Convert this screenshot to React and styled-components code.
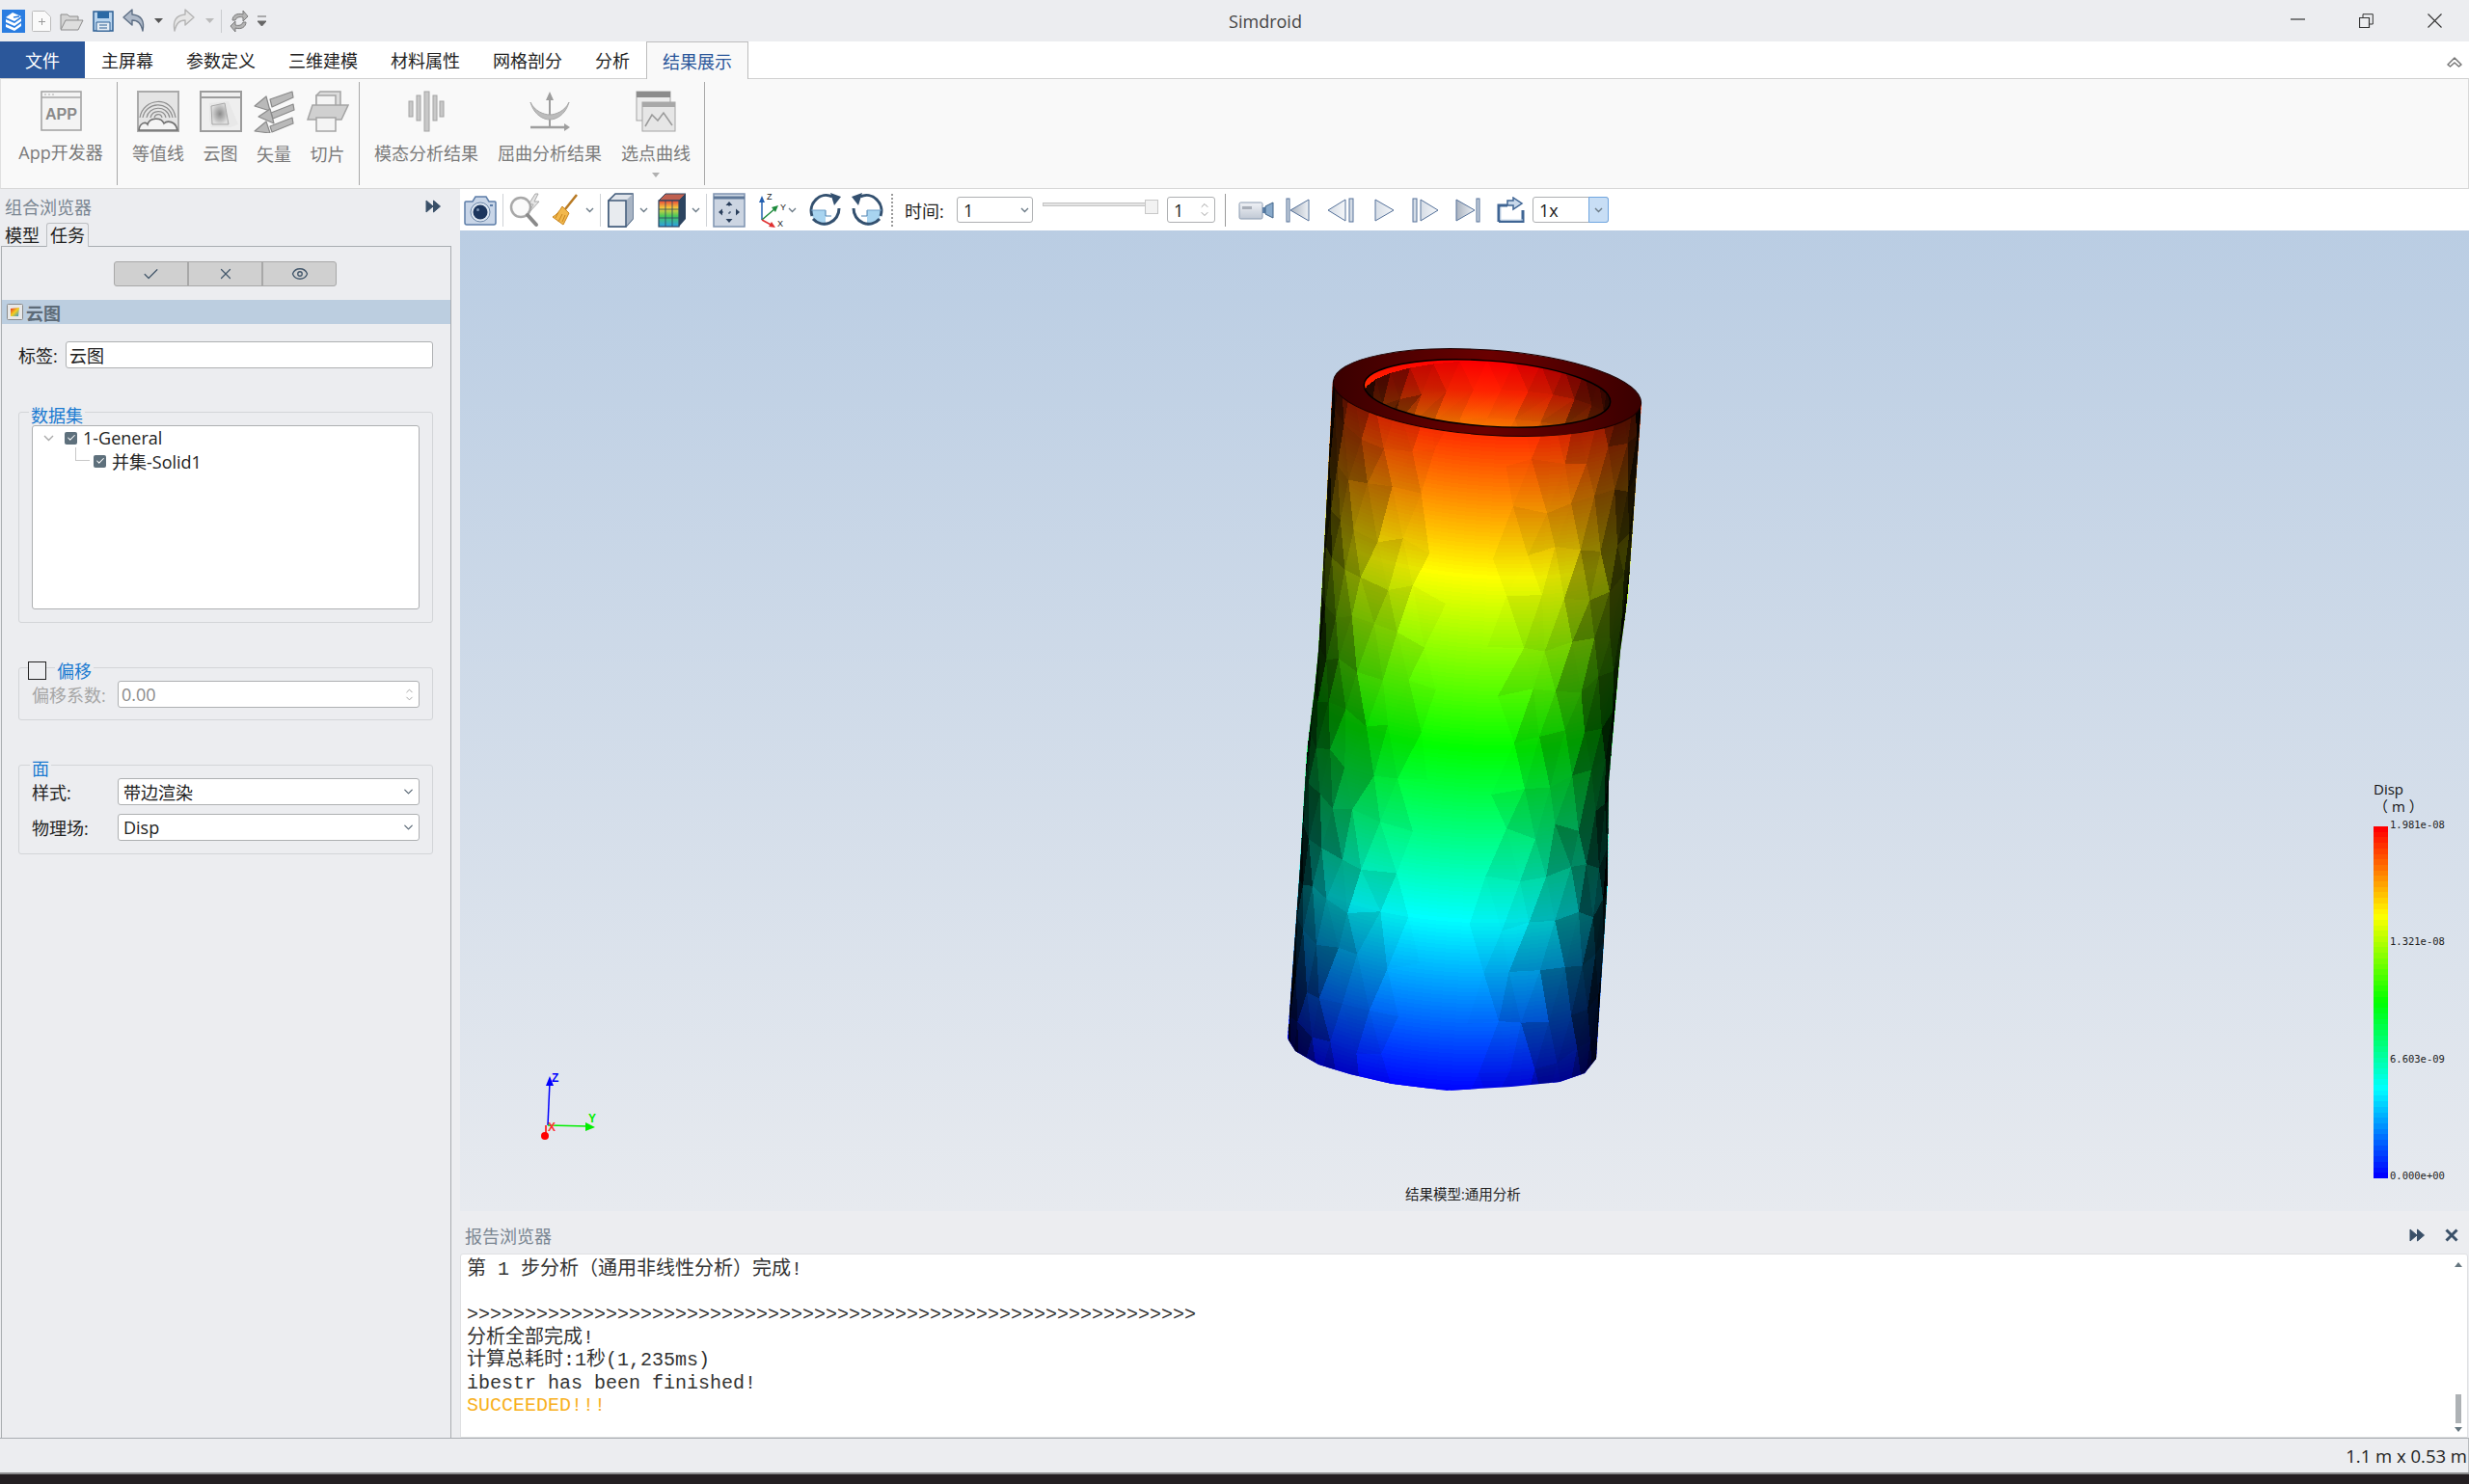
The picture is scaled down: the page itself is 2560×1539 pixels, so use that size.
import React from 'react';
import styled, { createGlobalStyle } from 'styled-components';
import { Check, X, Eye, ChevronDown, ChevronUp } from 'lucide-react';

const SANS = `"Open Sans","Noto Sans CJK SC",sans-serif`;
const PANEL = '#ecedf0';

const Global = createGlobalStyle`
  html, body { margin: 0; padding: 0; background: ${PANEL}; }
  * { box-sizing: border-box; }
`;

/* ---------- model geometry ---------- */
const LEFT = [[395,1382],[565,1373],[675,1367],[716,1363],[779,1355],[910,1347],[1077,1335]];
const RIGHT = [[418,1702],[617,1688],[675,1680],[811,1668],[915,1667],[1098,1655]];
const BOTTOM = [[1343,1090],[1367,1104],[1400,1114],[1443,1124],[1500,1131],[1567,1127],[1617,1122],[1643,1113]];
const interp = (t, y) => {
  if (y <= t[0][0]) return t[0][1];
  for (let i = 1; i < t.length; i++) if (y <= t[i][0]) {
    const a = t[i-1], b = t[i];
    return a[1] + (b[1]-a[1])*(y-a[0])/(b[0]-a[0]);
  }
  return t[t.length-1][1];
};
const pt = (u, yc) => {
  const L = interp(LEFT, yc-11), R = interp(RIGHT, yc+11);
  const x = (L+R)/2 + u*(R-L)/2;
  const y = yc + 11*Math.max(-1,Math.min(1,u)) + 44*Math.sqrt(Math.max(0,1-u*u));
  return [x.toFixed(1), y.toFixed(1)].join(',');
};
const jet = (s) => {
  const stops = [[255,0,0],[255,255,0],[0,255,0],[0,255,255],[0,0,255]];
  const c = Math.max(0, Math.min(0.9999, s))*4, i = Math.floor(c), f = c-i;
  const m = stops[i].map((v,k) => Math.round(v+(stops[i+1][k]-v)*f));
  return `rgb(${m[0]},${m[1]},${m[2]})`;
};
let seed = 4711;
const rnd = () => { seed = (seed*16807)%2147483647; return seed/2147483647; };

const strips = [];
for (let yc = 300; yc < 1150; yc += 4) {
  const top = [], bot = [];
  for (let u = -1.2; u <= 1.21; u += 0.1) { top.push(pt(u,yc)); bot.unshift(pt(u,yc+6)); }
  strips.push({ p: top.concat(bot).join(' '), c: jet((yc-374)/712) });
}
const facets = [];
{
  const N = 15, M = 15, dT = Math.PI/N, y0 = 385, dY = (1110-385)/M, V = [];
  for (let j = 0; j <= M+1; j++) {
    V[j] = [];
    for (let i = 0; i <= N+3; i++) {
      V[j][i] = { th: -Math.PI/2 + (i-1.5 + (j%2 ? .5 : 0))*dT + (rnd()-.5)*dT*.3, y: y0 + j*dY + (rnd()-.5)*dY*.3 };
    }
  }
  const P = (v) => pt(Math.sin(Math.max(-Math.PI/2,Math.min(Math.PI/2,v.th))), v.y);
  const add = (a,b,c) => {
    const th = (a.th+b.th+c.th)/3 + (rnd()-.5)*.2 + 0.05;
    const cl = Math.max(-Math.PI/2,Math.min(Math.PI/2,th));
    const o = 1-Math.min(1,Math.pow(Math.cos(cl),1.35)*1.04);
    if (o > .01) facets.push({ p: `${P(a)} ${P(b)} ${P(c)}`, o: o.toFixed(3) });
  };
  for (let j = 0; j <= M; j++) for (let i = 0; i < N+3; i++) {
    if (j%2 === 0) {
      add(V[j][i],V[j][i+1],V[j+1][i]);
      add(V[j+1][i],V[j+1][i+1],V[j][i+1]);
    } else {
      add(V[j][i],V[j+1][i+1],V[j+1][i]);
      add(V[j][i],V[j][i+1],V[j+1][i+1]);
    }
  }
}
const inner = [];
{
  const N = 14, rows = 3;
  const Q = (i,j) => {
    const th = -Math.PI/2 + (i + (j%2?.5:0))*Math.PI/N;
    const t = Math.max(-Math.PI/2,Math.min(Math.PI/2,th));
    return { s: Math.sin(t), p: `${(1542+128*Math.sin(t)).toFixed(1)},${(408-34*Math.cos(t)+j*30).toFixed(1)}` };
  };
  for (let j = 0; j < rows; j++) for (let i = -1; i < N+1; i++) {
    const a=Q(i,j), b=Q(i+1,j), c=Q(i,j+1), d=Q(i+1,j+1);
    [[a,b,c],[c,d,b]].forEach(([x,y,z]) => {
      const s = Math.abs((x.s+y.s+z.s)/3)+(rnd()-.5)*.12;
      inner.push({ p:`${x.p} ${y.p} ${z.p}`, o: Math.max(0,Math.min(.85,s*s*.95)).toFixed(3) });
    });
  }
}
const outline = [[1382,395],[1702,418],...RIGHT.slice(1).map(r=>[r[1],r[0]]),...BOTTOM.slice().reverse(),...LEFT.slice().reverse().map(r=>[r[1],r[0]])].map(p=>p.join(',')).join(' ');
const bands = Array.from({length:64},(_,i)=>jet(i/63));

/* ---------- chrome ---------- */
const Root = styled.div`
  width: 2560px; height: 1539px; display: flex; flex-direction: column; overflow: hidden;
  background: ${PANEL}; font-family: ${SANS}; font-size: 18px; color: #222;
`;
const TitleBar = styled.div`
  height: 43px; flex: none; display: flex; align-items: center; position: relative; background: ${PANEL};
`;
const Quick = styled.div`display: flex; align-items: center; height: 43px; padding-left: 2px;`;
const QuickSlot = styled.div`
  margin-left: ${p => p.$l}px; width: ${p => p.$w}px; height: 24px; display: flex; align-items: center; justify-content: center; flex: none;
`;
const QuickSep = styled.div`margin-left: ${p => p.$l}px; width: 1px; height: 24px; background: #c9cbce;`;
const AppTitle = styled.div`
  position: absolute; left: 0; right: 0; top: 9px; text-align: center; font-size: 18px; line-height: 26px; color: #444; text-indent: 64px;
`;
const WinCtl = styled.div`
  position: absolute; top: 0; height: 43px; display: flex; right: 0; padding-right: 28px; gap: 56px; align-items: center;
`;
const MenuBar = styled.div`
  height: 38px; flex: none; display: flex; align-items: stretch; background: #fff; position: relative;
`;
const FileTab = styled.div`
  width: 88px; background: #2b579a; color: #fff; display: flex; align-items: center; justify-content: center;
`;
const MenuItem = styled.div`padding: 0 17px; display: flex; align-items: center; white-space: nowrap; color: #222;`;
const ActiveTab = styled.div`
  padding: 0 16px; height: 39px; display: flex; align-items: center; color: #2b579a;
  background: #f9f9f9; border: 1px solid #bdbdbd; border-bottom: 0; position: relative; z-index: 1;
`;
const Collapse = styled.div`position: absolute; right: 7px; top: 10px; width: 16px; height: 16px;`;
const Ribbon = styled.div`
  height: 115px; flex: none; display: flex; background: #f9f9f9; border-top: 1px solid #d0d0d0; border-bottom: 1px solid #d8d8d8; border-right: 1px solid #d8d8d8; border-left: 1px solid #e0e0e0; position: relative;
`;
const RibbonGroup = styled.div`
  display: flex; width: ${p => p.$w}px; padding: 0 0 0 ${p => p.$pl}px; gap: ${p => p.$gap}px; flex: none; position: relative;
  &::after { content: ''; position: absolute; right: 0; top: 3px; bottom: 3px; width: 1px; background: #a9a9a9; }
`;
const RibbonBtn = styled.div`
  display: flex; flex-direction: column; align-items: center; color: #7b7b7b; white-space: nowrap; padding-top: 12px; position: relative; flex: none;
  width: ${p => p.$w}px;
`;
const RibbonLabel = styled.div`margin-top: 10px; line-height: 24px; font-size: 18px;`;
const MoreArrow = styled.div`
  position: absolute; left: 50%; margin-left: -4px; top: 97px; width: 0; height: 0; border: 4.5px solid transparent; border-top: 5px solid #b0b0b0;
`;
const Body = styled.div`flex: 1; display: flex; min-height: 0;`;
const LeftPanel = styled.div`
  width: 477px; flex: none; display: flex; flex-direction: column; background: ${PANEL};
`;
const PanelHead = styled.div`
  height: 35px; display: flex; align-items: center; justify-content: space-between; padding: 0 12px 0 5px; color: #7a8692; flex: none; width: 470px;
`;
const TabRow = styled.div`display: flex; height: 24px; padding-left: 5px; flex: none; position: relative; z-index: 1;`;
const PlainTab = styled.div`width: 42px; line-height: 24px; padding-top: 1px;`;
const PaneTab = styled.div`
  width: 44px; margin-left: 1px; background: ${PANEL}; border: 1px solid #bdbfc2; border-bottom: 0; border-radius: 3px 3px 0 0; text-align: center; line-height: 25px; height: 25px;
`;
const Pane = styled.div`
  width: 467px; margin-left: 1px; flex: 1; border: 1px solid #a9adb1; border-bottom: 0; display: flex; flex-direction: column; padding-top: 15px;
`;
const BtnBar = styled.div`
  align-self: center; width: 231px; height: 26px; display: flex; border: 1px solid #a8a8a8; border-radius: 3px; background: #d0d0d0; margin-left: -2px; flex: none;
`;
const BarBtn = styled.div`
  flex: 1; display: flex; align-items: center; justify-content: center; color: #44586c;
  & + & { border-left: 2px solid #a8a8a8; }
`;
const SectionBar = styled.div`
  margin-top: 14px; height: 25px; background: #bccee0; display: flex; align-items: center; padding-left: 5px; gap: 3px; font-weight: 700; color: #5d6b78; flex: none;
`;
const LabelRow = styled.div`
  display: flex; align-items: center; height: 28px; margin: ${p => p.$m || '18px 0 0 17px'}; flex: none;
`;
const FieldLabel = styled.div`width: ${p => p.$w}px; flex: none; color: ${p => p.$muted ? '#a6a6a6' : '#222'}; white-space: nowrap;`;
const TextInput = styled.div`
  width: ${p => p.$w}px; height: 28px; background: #fff; border: 1px solid #aeb0b2; border-radius: 3px; display: flex; align-items: center; padding-left: ${p => p.$pl || 3}px; color: ${p => p.$muted ? '#8a8a8a' : '#222'}; position: relative; flex: none;
`;
const GroupBox = styled.div`
  margin: ${p => p.$mt}px 0 0 17px; width: 430px; height: ${p => p.$h}px; border: 1px solid #d3d5d8; border-radius: 3px; position: relative; flex: none; padding: 13px 0 0 13px;
`;
const GroupTitle = styled.div`
  position: absolute; left: ${p => p.$l}px; top: -7px; background: ${PANEL}; color: #1a7ad0; line-height: 20px; padding: 0 2px; display: flex; align-items: center;
`;
const BoxCheck = styled.div`
  position: absolute; left: 9px; top: -7px; width: 19px; height: 19px; border: 1px solid #222; background: ${PANEL};
`;
const TreeBox = styled.div`
  width: 402px; height: 191px; background: #fff; border: 1px solid #aeb0b2; border-radius: 3px;
`;
const TreeRow = styled.div`
  display: flex; align-items: center; height: 24px; padding-left: ${p => p.$l}px; white-space: nowrap; position: relative;
`;
const TreeChevron = styled.svg`margin-right: 11px; flex: none;`;
const TreeCheck = styled.div`
  width: 13px; height: 13px; border-radius: 2px; background: #5e707c; color: #fff; display: flex; align-items: center; justify-content: center; margin-right: 6px; flex: none;
`;
const Connector = styled.div`
  position: absolute; left: 44px; top: -2px; width: 15px; height: 14px; border-left: 1px solid #c8c8c8; border-bottom: 1px solid #c8c8c8;
`;
const SpinArrows = styled.div`
  position: absolute; right: 4px; top: 1px; bottom: 1px; display: flex; flex-direction: column; justify-content: center; color: #a0a0a0;
  svg { margin: -1.5px 0; }
`;
const SelArrow = styled.div`
  position: absolute; right: 3px; top: 50%; transform: translateY(-50%); color: #5d6b78; display: flex;
`;
const Main = styled.div`flex: 1; display: flex; flex-direction: column; min-width: 0;`;
const Toolbar = styled.div`
  height: 43px; flex: none; background: #fff; display: flex; align-items: center;
`;
const Tool = styled.div`
  margin-left: ${p => p.$l}px; width: ${p => p.$w}px; height: 36px; flex: none; display: flex; align-items: center; justify-content: center;
`;
const ToolSep = styled.div`
  margin-left: ${p => p.$l}px; width: 1px; height: 34px; flex: none;
  ${p => p.$dot ? 'border-left: 2px dotted #9a9a9a; width: 2px;' : `background: ${p.$dark ? '#9a9a9a' : '#cfd2d6'};`}
`;
const TimeLabel = styled.div`margin-left: ${p => p.$l}px; width: 40px; flex: none; color: #222; white-space: nowrap;`;
const Combo = styled.div`
  margin-left: ${p => p.$l}px; width: ${p => p.$w}px; height: 27px; flex: none; position: relative; background: #fff; border: 1px solid #aeb0b2; border-radius: 3px; display: flex; align-items: center; padding-left: 6px;
`;
const BlueDrop = styled.div`
  position: absolute; right: -1px; top: -1px; bottom: -1px; width: 21px; background: #c8def5; border: 1px solid #70a6e0; border-radius: 0 3px 3px 0; display: flex; align-items: center; justify-content: center; color: #5d6b78;
`;
const Slider = styled.div`margin-left: ${p => p.$l}px; width: 120px; height: 16px; flex: none; position: relative; margin-top: -6px;`;
const SliderTrack = styled.div`position: absolute; left: 0; right: 2px; top: 3px; height: 4px; background: #e4e4e4; border: 1px solid #c4c4c4;`;
const SliderKnob = styled.div`position: absolute; right: 0; top: 0; width: 14px; height: 15px; background: #f2f2f2; border: 1px solid #c8c8c8;`;
const Viewport = styled.div`
  flex: 1; position: relative; background: linear-gradient(180deg, #bacde3 0%, #e7eaef 100%); min-height: 0; overflow: hidden;
`;
const ModelSvg = styled.svg`position: absolute; left: 0; top: 0; width: 2083px; height: 1017px;`;
const Caption = styled.div`
  position: absolute; left: 980px; top: 990px; font-size: 14.5px; line-height: 20px; color: #222; white-space: nowrap;
`;
const Legend = styled.div`position: absolute; left: 1984px; top: 570px; display: flex; flex-direction: column;`;
const LegendTitle = styled.div`font-size: 15px; line-height: 18px; color: #111; height: 37px; white-space: pre;`;
const LegendBody = styled.div`display: flex; margin-top: 11px; align-items: flex-start;`;
const LegendBar = styled.svg`width: 15px; height: 365px; display: block; flex: none;`;
const LegendScale = styled.div`
  margin: -9px 0 0 2px; height: 378px; display: flex; flex-direction: column; justify-content: space-between; font-family: "DejaVu Sans Mono", monospace; font-size: 10.5px; line-height: 14px; color: #222;
`;
const ReportHead = styled.div`
  height: 44px; flex: none; display: flex; align-items: center; justify-content: space-between; padding: 5px 11px 0 5px; color: #7a8692;
`;
const HeadIcons = styled.div`display: flex; gap: 20px; align-items: center;`;
const ReportBox = styled.div`
  height: 191px; flex: none; margin-right: 1px; background: #fff; border: 1px solid #dfe0e2; border-radius: 3px 3px 0 0; padding: 4px 6px; position: relative;
  font-family: "Liberation Mono","Noto Sans CJK SC",monospace; font-size: 20px; line-height: 23.5px; color: #333; white-space: pre;
`;
const ReportLine = styled.div`height: 23.5px; color: ${p => p.$c || '#333'};`;
const ScrollCol = styled.div`
  position: absolute; right: 5px; top: 8px; bottom: 5px; width: 8px; display: flex; flex-direction: column; align-items: center; justify-content: space-between;
`;
const ScrollThumb = styled.div`width: 6px; height: 30px; background: #aeb2b5; margin-top: auto; margin-bottom: 4px;`;
const Tri = styled.div`
  width: 0; height: 0; border-left: 4.5px solid transparent; border-right: 4.5px solid transparent;
  ${p => p.$down ? 'border-top: 5px solid #66767f;' : 'border-bottom: 5px solid #66767f;'}
`;
const StatusBar = styled.div`
  height: 36px; flex: none; display: flex; align-items: center; justify-content: flex-end; border-top: 1px solid #a9adb1; border-right: 1px solid #b8bbbe; padding: 0 1px 0 0; font-size: 18.5px; color: #222; background: ${PANEL};
`;
const TaskBar = styled.div`height: 12px; flex: none; background: #241f22; border-top: 2px solid #8c8d8f;`;

/* ---------- icons ---------- */
const DoubleArrow = () => (
  <svg width="17" height="14" viewBox="0 0 17 14"><path d="M1 1l7 6-7 6zM8.5 1l7 6-7 6z" fill="#3a5068" stroke="#3a5068" strokeLinejoin="round"/></svg>
);
const Chev = ({c='#6d7c88'}) => (
  <svg width="9" height="6" viewBox="0 0 9 6"><path d="M1 1l3.5 3.5L8 1" fill="none" stroke={c} strokeWidth="1.4"/></svg>
);
const DropTri = ({c='#666', w=9}) => <svg width={w} height="5" viewBox="0 0 9 5"><path d="M0 0h9L4.5 5z" fill={c}/></svg>;

const Logo = () => (
  <svg width="24" height="24" viewBox="0 0 24 24"><rect width="24" height="24" fill="#2a7de1"/>
    <path d="M4 8l7-5 9 4-7 5z" fill="#fff"/><path d="M4 10l9 4 7-5v3l-7 5-9-4z" fill="#fff"/><path d="M4 15l9 4 7-5v3l-7 5-9-4z" fill="#fff"/><path d="M12 8l6-1" stroke="#2a7de1" strokeWidth="1.5"/></svg>
);
const NewI = () => <svg width="21" height="22" viewBox="0 0 21 22"><path d="M.5 1.5q0-1 1-1h12l6 6v14q0 1-1 1h-17q-1 0-1-1z" fill="#fafafa" stroke="#bcbcbc"/><path d="M7 11.5h7M10.500 8v7" stroke="#999"/></svg>;
const OpenI = () => <svg width="25" height="20" viewBox="0 0 25 20"><path d="M1 18V3h7l2 2h9v4" fill="#d4d4d4" stroke="#8c8c8c"/><path d="M1 19l5-10h18l-5 10z" fill="#dedede" stroke="#8c8c8c"/></svg>;
const SaveI = () => <svg width="22" height="22" viewBox="0 0 22 22"><path d="M1 1h20v20H1z" fill="#b8d4ee" stroke="#2c5f94" strokeWidth="1.5"/><path d="M5 1h12v7H5z" fill="#2c6aa5"/><path d="M4 12h14v9H4z" fill="#e4ecf4" stroke="#2c5f94"/><path d="M7 15h8M7 18h8" stroke="#2c5f94"/></svg>;
const UndoI = ({c='#5e6f85', f='#aeb9c8', flip}) => <svg width="24" height="26" viewBox="0 0 24 26" style={flip ? {transform:'scaleX(-1)'} : undefined}><path d="M10 1L1 9l9 8v-5c6 0 9 3 11 11 2-10-1-16-11-17z" fill={f} stroke={c} strokeWidth="1.4" strokeLinejoin="round"/></svg>;
const RefreshI = () => <svg width="20" height="24" viewBox="0 0 20 24"><path d="M3 11c0-5 5-8 11-6V1l5 6-5 5V8c-4-1-7 0-8 3z" fill="#b4b4b4" stroke="#7c7c7c"/><path d="M17 13c0 5-5 8-11 6v4l-5-6 5-5v4c4 1 7 0 8-3z" fill="#b4b4b4" stroke="#7c7c7c"/></svg>;

const AppI = () => <svg width="43" height="42" viewBox="0 0 43 42"><rect x="1" y="1" width="41" height="40" fill="#f4f4f4" stroke="#a0a0a0" strokeWidth="1.5"/><path d="M1 7h41" stroke="#a8a8a8" strokeWidth="1.5"/><path d="M4 4h2M8 4h2M12 4h2" stroke="#aaa"/><text x="21.500" y="30" textAnchor="middle" fontFamily="Liberation Sans" fontSize="16" fontWeight="700" fill="#8a8a8a">APP</text></svg>;
const ContourI = () => <svg width="44" height="43" viewBox="0 0 44 43"><rect x="1" y="1" width="42" height="41" fill="#e4e4e4" stroke="#aaa" strokeWidth="2"/><g fill="none" stroke="#8d8d8d" strokeWidth="1.2"><path d="M3 28C6 8 36 4 40 28"/><path d="M6 28C9 12 33 9 37 28"/><path d="M10 28c2-12 21-14 24 0"/><path d="M14 28c2-8 14-9 16 0"/><path d="M18 28c1-4 7-5 8 0"/></g><path d="M2 41c1-8 7-9 9-6 2-7 14-8 17-1 3-3 12-3 14 7z" fill="#f4f4f4" stroke="#6f6f6f" strokeWidth="1.6"/></svg>;
const CloudI = () => <svg width="44" height="43" viewBox="0 0 44 43"><defs><radialGradient id="cl"><stop offset="0" stopColor="#8a8a8a"/><stop offset=".7" stopColor="#c4c4c4"/><stop offset="1" stopColor="#dedede"/></radialGradient></defs><rect x="1" y="1" width="42" height="41" fill="#efefef" stroke="#9c9c9c" strokeWidth="2"/><path d="M1 7h42" stroke="#9c9c9c" strokeWidth="2"/><path d="M10 13l20-2 10 24-8 3H12l-2-8z" fill="#e8e8e8"/><path d="M12 16l14-3 4 22H13z" fill="url(#cl)" stroke="#a8a8a8"/></svg>;
const VectorI = () => <svg width="44" height="44" viewBox="0 0 44 44"><g fill="#b9b9b9" stroke="#8a8a8a" strokeWidth="1.2" strokeLinejoin="round"><path d="M18 9L41 1l1 6-22 10z"/><path d="M2 16l12-10 4 15z"/><path d="M19 23l23-9 1 6-22 9z"/><path d="M6 27l12-8 4 15z"/><path d="M18 37l23-9 1 6-22 9z"/><path d="M2 42l12-10 4 12z"/></g></svg>;
const SliceI = () => <svg width="44" height="44" viewBox="0 0 44 44"><path d="M10 5l4-4h21v20H10z" fill="#dcdcdc" stroke="#a4a4a4" strokeWidth="1.5"/><path d="M10 5h20v20H10z" fill="#f4f4f4" stroke="#a4a4a4" strokeWidth="1.5"/><path d="M6 15h37l-7 15H1z" fill="#d0d0d0" stroke="#a4a4a4" strokeWidth="1.5"/><path d="M10 28h20v14H10z" fill="#f4f4f4" stroke="#a4a4a4" strokeWidth="1.5"/></svg>;
const ModalI = () => <svg width="38" height="43" viewBox="0 0 38 43"><g fill="#c8c8c8" stroke="#a4a4a4"><rect x="17" y="1" width="5" height="41"/><rect x="1" y="11" width="4" height="16"/><rect x="9" y="5" width="4" height="26"/><rect x="26" y="5" width="4" height="26"/><rect x="33" y="11" width="4" height="16"/></g></svg>;
const BuckleI = () => <svg width="42" height="43" viewBox="0 0 42 43"><path d="M21 1l-4 9h3v28h2V10h3z" fill="#9e9e9e"/><path d="M1 38h36" stroke="#9e9e9e" strokeWidth="2.500"/><path d="M36 34l6 4-6 4z" fill="#9e9e9e"/><path d="M1 12c4 14 14 18 20 18s16-4 20-18c-4 9-14 13-20 13S5 21 1 12z" fill="#bcbcbc" stroke="#a8a8a8"/></svg>;
const CurveI = () => <svg width="42" height="43" viewBox="0 0 42 43"><rect x="1" y="1" width="35" height="30" fill="#ececec" stroke="#a4a4a4"/><rect x="1" y="1" width="35" height="6" fill="#8c8c8c"/><rect x="7" y="12" width="34" height="30" fill="#e6e6e6" stroke="#a4a4a4"/><rect x="7" y="12" width="34" height="5" fill="#a8a8a8"/><path d="M10 37l7-12 6 6 6-8 9 13" fill="none" stroke="#9a9a9a" strokeWidth="1.5"/></svg>;

const CameraI = () => <svg width="34" height="32" viewBox="0 0 34 32"><path d="M2 7h7l3-5h11l3 5h6q1 0 1 1v21q0 2-2 2H3q-2 0-2-2V8q0-1 1-1z" fill="#c9d6e8" stroke="#5d7ea8" strokeWidth="1.500"/><circle cx="17" cy="18" r="10" fill="#dfe8f3" stroke="#6c87a8"/><circle cx="17" cy="18" r="7.500" fill="#1c365e"/><circle cx="14.500" cy="15.500" r="1.500" fill="#7c94b4"/><rect x="27" y="10" width="3" height="2" fill="#5d7ea8"/></svg>;
const MagI = () => <svg width="34" height="36" viewBox="0 0 34 36"><path d="M27 1l-7 11h5l-5 9 11-12h-5l4-8z" fill="#e4e4e4" stroke="#a8a8a8"/><circle cx="12" cy="15" r="10" fill="#fafafa" stroke="#a8a8a8" strokeWidth="2.500"/><path d="M19 23l9 10" stroke="#8a8a8a" strokeWidth="4" strokeLinecap="round"/></svg>;
const BroomI = () => <svg width="28" height="34" viewBox="0 0 28 34"><path d="M26 1L14 16" stroke="#b87a24" strokeWidth="2.500"/><path d="M11 13l7 7-6 12-11-8c4-2 7-6 10-11z" fill="#f2b84c" stroke="#c8851f"/><path d="M7 19l-3 6M11 21l-4 8M14 22l-3 7" stroke="#c8851f"/></svg>;
const CubeI = () => <svg width="28" height="36" viewBox="0 0 28 36"><path d="M1 8l7-7h18v26l-7 8H1z" fill="#e0e4ea" stroke="#3e5878" strokeWidth="1.500"/><path d="M19 8l7-7v26l-7 8z" fill="#a8b4c4"/><path d="M1 8h18v27H1z" fill="#e8ebef" stroke="#3e5878" strokeWidth="1.500"/></svg>;
const ColorCubeI = () => <svg width="30" height="36" viewBox="0 0 30 36"><defs><linearGradient id="cc" x1="0" y1="0" x2="0" y2="1"><stop offset="0" stopColor="#e8453a"/><stop offset=".3" stopColor="#f2d23c"/><stop offset=".6" stopColor="#46c85a"/><stop offset="1" stopColor="#2b9ee6"/></linearGradient></defs><path d="M1 8l7-7h21l-7 7z" fill="#c06050" stroke="#2c4460"/><path d="M22 8l7-7v26l-7 8z" fill="#2c4460"/><rect x="1" y="8" width="21" height="27" fill="url(#cc)" stroke="#2c4460" strokeWidth="1.200"/><path d="M8 8v27M15 8v27M1 17h21M1 26h21" stroke="#2c4460" strokeWidth=".8"/></svg>;
const MoveI = () => <svg width="34" height="36" viewBox="0 0 34 36"><rect x="1" y="1" width="32" height="34" fill="#ccd5e2" stroke="#7e93b0" strokeWidth="1.500"/><path d="M1 5h32" stroke="#5f7899" strokeWidth="3"/><g fill="#2a3f5c"><path d="M17 9l-3.500 4h7z"/><path d="M17 31l-3.500-4h7z"/><path d="M6 20l4-3.500v7z"/><path d="M28 20l-4-3.500v7z"/></g><path d="M17 12v16M9 20h16" stroke="#2a3f5c" strokeDasharray="2 6"/></svg>;
const XyzI = () => <svg width="34" height="36" viewBox="0 0 34 36" fontFamily="Liberation Sans" fontSize="9"><path d="M4 28V7" stroke="#2460b0" strokeWidth="1.500"/><path d="M4 3L1 10h6z" fill="#2460b0"/><path d="M4 28L18 16" stroke="#1d8a3c" strokeWidth="1.500"/><path d="M21 13l-7 2 4 5z" fill="#1d8a3c"/><path d="M4 28l11 6" stroke="#e03030" strokeWidth="1.500"/><path d="M18 36l-7-1 3-5z" fill="#e03030"/><text x="9" y="7" fill="#222">Z</text><text x="23" y="18" fill="#222">Y</text><text x="20" y="35" fill="#222">X</text></svg>;
const RotI = ({flip}) => <svg width="34" height="36" viewBox="0 0 34 36" style={flip ? {transform:'scaleX(-1)'} : undefined}><path d="M17 18V34A15 16 0 0 1 2 18z" fill="#a8d4f0"/><path d="M3 24A15.500 16 0 0 1 24 4" fill="none" stroke="#33506f" strokeWidth="3"/><path d="M31 16A15.500 16 0 0 1 4 27" fill="none" stroke="#33506f" strokeWidth="3"/><path d="M22 0l11 4-7 9z" fill="#33506f"/><path d="M17 18v6h6" fill="none" stroke="#4a80b0"/><path d="M2 18h15" stroke="#6fa0c8"/></svg>;
const VideoI = () => <svg width="37" height="20" viewBox="0 0 37 20"><defs><linearGradient id="vg" x1="0" y1="0" x2="0" y2="1"><stop offset="0" stopColor="#f0f2f6"/><stop offset="1" stopColor="#c0c8d4"/></linearGradient></defs><rect x="1" y="2" width="24" height="17" rx="1.500" fill="url(#vg)" stroke="#8a9ab0"/><rect x="4" y="6" width="10" height="3" fill="#a8aeb8"/><path d="M25 7h3v6h-3z" fill="#5d80a8"/><path d="M28 6l8-4v16l-8-4z" fill="#89aacb" stroke="#416488"/></svg>;
const NavGrad = () => <defs><linearGradient id="ng" x1="0" y1="0" x2="1" y2="0"><stop offset="0" stopColor="#a9b2bf"/><stop offset="1" stopColor="#eef1f5"/></linearGradient><linearGradient id="ngl" x1="0" y1="0" x2="1" y2="0"><stop offset="0" stopColor="#d6dde6"/><stop offset="1" stopColor="#f4f6f9"/></linearGradient></defs>;
const NavFirst = () => <svg width="25" height="26" viewBox="0 0 25 26"><NavGrad/><rect x="1" y="1" width="3" height="24" fill="#c8d2de" stroke="#56729a"/><path d="M24 2v22L5 13z" fill="url(#ng)" stroke="#56729a"/></svg>;
const NavPrev = () => <svg width="28" height="26" viewBox="0 0 28 26"><NavGrad/><path d="M19 2v22L1 13z" fill="url(#ngl)" stroke="#56729a"/><rect x="23" y="1" width="4" height="24" fill="#d4dce6" stroke="#56729a"/></svg>;
const NavPlay = () => <svg width="21" height="26" viewBox="0 0 21 26"><NavGrad/><path d="M1 2v22l19-11z" fill="url(#ngl)" stroke="#56729a"/></svg>;
const NavNext = () => <svg width="28" height="26" viewBox="0 0 28 26"><NavGrad/><rect x="1" y="1" width="4" height="24" fill="#d4dce6" stroke="#56729a"/><path d="M9 2v22l18-11z" fill="url(#ngl)" stroke="#56729a"/></svg>;
const NavLast = () => <svg width="26" height="26" viewBox="0 0 26 26"><NavGrad/><path d="M1 2v22l19-11z" fill="url(#ng)" stroke="#56729a"/><rect x="22" y="1" width="3" height="24" fill="#c8d2de" stroke="#56729a"/></svg>;
const LoopI = () => <svg width="29" height="27" viewBox="0 0 29 27"><path d="M2 26V9h9M27 14v12H2" fill="none" stroke="#3f6594" strokeWidth="3"/><path d="M27 24H4V11" fill="none" stroke="#c8d8ea" strokeWidth="1"/><path d="M11 4h6V1l9 6-9 6V9h-6z" fill="#c8d8ea" stroke="#3f6594" strokeWidth="1.500"/></svg>;
const SmallCloud = () => <svg width="17" height="17" viewBox="0 0 17 17"><rect x=".5" y=".5" width="16" height="16" rx="1" fill="#e8e8e8" stroke="#8a8a8a"/><defs><linearGradient id="sc" x1="0" y1="0" x2="1" y2="1"><stop offset="0" stopColor="#e82020"/><stop offset=".5" stopColor="#f2d020"/><stop offset="1" stopColor="#2090e0"/></linearGradient></defs><path d="M4 5l9-1-1 9H4z" fill="url(#sc)"/></svg>;

const Model = () => (
  <ModelSvg viewBox="477 239 2083 1017">
    <defs>
      <clipPath id="bodyClip"><polygon points={outline}/></clipPath>
      <clipPath id="innerClip"><ellipse cx="1542" cy="408" rx="128" ry="34" transform="rotate(4.1 1542 408)"/></clipPath>
      <linearGradient id="innerGrad" gradientUnits="userSpaceOnUse" x1="0" y1="376" x2="0" y2="442"><stop offset="0" stopColor="#ff0000"/><stop offset=".45" stopColor="#ff2400"/><stop offset="1" stopColor="#f87800"/></linearGradient>
      <linearGradient id="rimGrad" gradientUnits="userSpaceOnUse" x1="1382" y1="0" x2="1702" y2="0"><stop offset="0" stopColor="#3a0000"/><stop offset=".5" stopColor="#6a0000"/><stop offset="1" stopColor="#3a0000"/></linearGradient>
    </defs>
    <g clipPath="url(#bodyClip)" shapeRendering="crispEdges">
      {strips.map((s,i) => <polygon key={i} points={s.p} fill={s.c}/>)}
      {facets.map((f,i) => <polygon key={i} points={f.p} fill="#000" fillOpacity={f.o}/>)}
    </g>
    <ellipse cx="1542" cy="407" rx="160" ry="44" transform="rotate(4.1 1542 407)" fill="url(#rimGrad)" stroke="#1a0000" strokeWidth="1"/>
    <ellipse cx="1542" cy="408" rx="128" ry="34" transform="rotate(4.1 1542 408)" fill="url(#innerGrad)"/>
    <g clipPath="url(#innerClip)" shapeRendering="crispEdges">
      {inner.map((f,i) => <polygon key={i} points={f.p} fill="#000" fillOpacity={f.o}/>)}
    </g>
    <ellipse cx="1542" cy="408" rx="128" ry="34" transform="rotate(4.1 1542 408)" fill="none" stroke="#000" strokeWidth="1.400"/>
    <g fontFamily="Liberation Sans" fontWeight="700" fontSize="12">
      <path d="M568 1167L570 1122" stroke="#0000ff" strokeWidth="1.500"/>
      <path d="M570 1116l-4 10h8z" fill="#0000ff"/>
      <text x="572" y="1122" fill="#0000ff">Z</text>
      <path d="M568 1167L610 1168" stroke="#00ee00" strokeWidth="1.500"/>
      <path d="M617 1169l-10-5v9z" fill="#00ee00"/>
      <text x="610" y="1164" fill="#00ee00">Y</text>
      <path d="M566 1178V1167" stroke="#ff0000" strokeWidth="1.500"/>
      <circle cx="565" cy="1178" r="4" fill="#ff0000"/>
      <text x="568" y="1173" fill="#ff3030">X</text>
    </g>
  </ModelSvg>
);

export default function App() {
  return (
    <Root>
      <Global/>
      <TitleBar>
        <Quick>
          <QuickSlot $l={0} $w={24}><Logo/></QuickSlot>
          <QuickSlot $l={7} $w={21}><NewI/></QuickSlot>
          <QuickSlot $l={8} $w={25}><OpenI/></QuickSlot>
          <QuickSlot $l={9} $w={22}><SaveI/></QuickSlot>
          <QuickSlot $l={9} $w={24}><UndoI/></QuickSlot>
          <QuickSlot $l={8} $w={10}><DropTri c="#555"/></QuickSlot>
          <QuickSlot $l={9} $w={24}><UndoI flip c="#b4b4b4" f="#e6e6e6"/></QuickSlot>
          <QuickSlot $l={10} $w={10}><DropTri c="#bbb"/></QuickSlot>
          <QuickSep $l={7}/>
          <QuickSlot $l={8} $w={20}><RefreshI/></QuickSlot>
          <QuickSlot $l={9} $w={9}><svg width="9" height="11" viewBox="0 0 9 11"><path d="M0 1h9M0 6h9l-4.500 5z" stroke="#666" fill="#666"/></svg></QuickSlot>
        </Quick>
        <AppTitle>Simdroid</AppTitle>
        <WinCtl>
          <svg width="15" height="15" viewBox="0 0 15 15"><path d="M0 6h15" stroke="#333" strokeWidth="1.200"/></svg>
          <svg width="15" height="15" viewBox="0 0 15 15"><path d="M.5 4.500h10v10H.5z" fill="none" stroke="#333" strokeWidth="1.200"/><path d="M4 4V.7h10.300V11H11" fill="none" stroke="#333"/></svg>
          <svg width="15" height="15" viewBox="0 0 15 15"><path d="M.5.500l14 14M14.500.500l-14 14" stroke="#333" strokeWidth="1.100"/></svg>
        </WinCtl>
      </TitleBar>
      <MenuBar>
        <FileTab>文件</FileTab>
        <MenuItem>主屏幕</MenuItem>
        <MenuItem>参数定义</MenuItem>
        <MenuItem>三维建模</MenuItem>
        <MenuItem>材料属性</MenuItem>
        <MenuItem>网格剖分</MenuItem>
        <MenuItem>分析</MenuItem>
        <ActiveTab>结果展示</ActiveTab>
        <Collapse><svg width="16" height="16" viewBox="0 0 16 16"><path d="M1 11l7-7 7 7-2.500 2L8 9l-4.500 4z" fill="none" stroke="#777" strokeWidth="1.500" strokeLinejoin="round"/></svg></Collapse>
      </MenuBar>
      <Ribbon>
        <RibbonGroup $w={121} $pl={16} $gap={0}>
          <RibbonBtn $w={92}><AppI/><RibbonLabel>App开发器</RibbonLabel></RibbonBtn>
        </RibbonGroup>
        <RibbonGroup $w={251} $pl={15} $gap={19.5}>
          <RibbonBtn $w={54}><ContourI/><RibbonLabel>等值线</RibbonLabel></RibbonBtn>
          <RibbonBtn $w={36}><CloudI/><RibbonLabel>云图</RibbonLabel></RibbonBtn>
          <RibbonBtn $w={36}><VectorI/><RibbonLabel>矢量</RibbonLabel></RibbonBtn>
          <RibbonBtn $w={36}><SliceI/><RibbonLabel>切片</RibbonLabel></RibbonBtn>
        </RibbonGroup>
        <RibbonGroup $w={358} $pl={15} $gap={20}>
          <RibbonBtn $w={108}><ModalI/><RibbonLabel>模态分析结果</RibbonLabel></RibbonBtn>
          <RibbonBtn $w={108}><BuckleI/><RibbonLabel>屈曲分析结果</RibbonLabel></RibbonBtn>
          <RibbonBtn $w={72}><CurveI/><RibbonLabel>选点曲线</RibbonLabel><MoreArrow/></RibbonBtn>
        </RibbonGroup>
      </Ribbon>
      <Body>
        <LeftPanel>
          <PanelHead>组合浏览器<DoubleArrow/></PanelHead>
          <TabRow>
            <PlainTab>模型</PlainTab>
            <PaneTab>任务</PaneTab>
          </TabRow>
          <Pane>
            <BtnBar>
              <BarBtn><Check size={19} strokeWidth={1.6}/></BarBtn>
              <BarBtn><X size={18} strokeWidth={1.6}/></BarBtn>
              <BarBtn><Eye size={18} strokeWidth={1.8}/></BarBtn>
            </BtnBar>
            <SectionBar><SmallCloud/>云图</SectionBar>
            <LabelRow>
              <FieldLabel $w={49}>标签:</FieldLabel>
              <TextInput $w={381}>云图</TextInput>
            </LabelRow>
            <GroupBox $mt={45} $h={219}>
              <GroupTitle $l={10}>数据集</GroupTitle>
              <TreeBox>
                <TreeRow $l={11}>
                  <TreeChevron width="11" height="7" viewBox="0 0 11 7"><path d="M1 1l4.500 4.500L10 1" fill="none" stroke="#aaa" strokeWidth="1.400"/></TreeChevron>
                  <TreeCheck><Check size={10} strokeWidth={2.500}/></TreeCheck>1-General
                </TreeRow>
                <TreeRow $l={63}>
                  <Connector/>
                  <TreeCheck><Check size={10} strokeWidth={2.500}/></TreeCheck>并集-Solid1
                </TreeRow>
              </TreeBox>
            </GroupBox>
            <GroupBox $mt={46} $h={55}>
              <BoxCheck/>
              <GroupTitle $l={37}>偏移</GroupTitle>
              <LabelRow $m="0">
                <FieldLabel $w={89} $muted>偏移系数:</FieldLabel>
                <TextInput $w={313} $muted>0.00<SpinArrows><ChevronUp size={11}/><ChevronDown size={11}/></SpinArrows></TextInput>
              </LabelRow>
            </GroupBox>
            <GroupBox $mt={46} $h={93}>
              <GroupTitle $l={11}>面</GroupTitle>
              <LabelRow $m="0">
                <FieldLabel $w={89}>样式:</FieldLabel>
                <TextInput $w={313} $pl={5}>带边渲染<SelArrow><ChevronDown size={15}/></SelArrow></TextInput>
              </LabelRow>
              <LabelRow $m="9px 0 0 0">
                <FieldLabel $w={89}>物理场:</FieldLabel>
                <TextInput $w={313} $pl={5}>Disp<SelArrow><ChevronDown size={15}/></SelArrow></TextInput>
              </LabelRow>
            </GroupBox>
          </Pane>
        </LeftPanel>
        <Main>
          <Toolbar>
            <Tool $l={4} $w={34}><CameraI/></Tool>
            <ToolSep $l={6}/>
            <Tool $l={6} $w={34}><MagI/></Tool>
            <Tool $l={10} $w={28}><BroomI/></Tool>
            <Tool $l={7} $w={9}><Chev/></Tool>
            <ToolSep $l={6}/>
            <Tool $l={7} $w={28}><CubeI/></Tool>
            <Tool $l={5} $w={9}><Chev/></Tool>
            <Tool $l={10} $w={30}><ColorCubeI/></Tool>
            <Tool $l={5} $w={9}><Chev/></Tool>
            <ToolSep $l={6}/>
            <Tool $l={6} $w={34}><MoveI/></Tool>
            <Tool $l={13} $w={34}><XyzI/></Tool>
            <Tool $l={-3} $w={9}><Chev/></Tool>
            <Tool $l={13} $w={34}><RotI/></Tool>
            <Tool $l={9} $w={34}><RotI flip/></Tool>
            <ToolSep $l={8} $dot/>
            <TimeLabel $l={12}>时间:</TimeLabel>
            <Combo $l={14} $w={79}>1<SelArrow><Chev/></SelArrow></Combo>
            <Slider $l={10}><SliderTrack/><SliderKnob/></Slider>
            <Combo $l={9} $w={50}>1<SpinArrows><ChevronUp size={12}/><ChevronDown size={12}/></SpinArrows></Combo>
            <ToolSep $l={10} $dark/>
            <Tool $l={13} $w={37}><VideoI/></Tool>
            <Tool $l={12} $w={25}><NavFirst/></Tool>
            <Tool $l={18} $w={28}><NavPrev/></Tool>
            <Tool $l={21} $w={21}><NavPlay/></Tool>
            <Tool $l={18} $w={28}><NavNext/></Tool>
            <Tool $l={17} $w={26}><NavLast/></Tool>
            <Tool $l={17} $w={29}><LoopI/></Tool>
            <Combo $l={8} $w={79}>1x<BlueDrop><Chev/></BlueDrop></Combo>
          </Toolbar>
          <Viewport>
            <Model/>
            <Caption>结果模型:通用分析</Caption>
            <Legend>
              <LegendTitle>Disp{'\n'}（ m ）</LegendTitle>
              <LegendBody>
                <LegendBar viewBox="0 0 15 64" preserveAspectRatio="none" shapeRendering="crispEdges">
                  {bands.map((c,i) => <rect key={i} x="0" y={i} width="15" height="1.100" fill={c}/>)}
                </LegendBar>
                <LegendScale>
                  <div>1.981e-08</div><div>1.321e-08</div><div>6.603e-09</div><div>0.000e+00</div>
                </LegendScale>
              </LegendBody>
            </Legend>
          </Viewport>
          <ReportHead>报告浏览器<HeadIcons><DoubleArrow/><svg width="14" height="14" viewBox="0 0 14 14"><path d="M1.500 1.500l11 11M12.500 1.500l-11 11" stroke="#3a5068" strokeWidth="3"/></svg></HeadIcons></ReportHead>
          <ReportBox>
            <ReportLine>第 1 步分析（通用非线性分析）完成!</ReportLine>
            <ReportLine> </ReportLine>
            <ReportLine>{'>'.repeat(63)}</ReportLine>
            <ReportLine>分析全部完成!</ReportLine>
            <ReportLine>计算总耗时:1秒(1,235ms)</ReportLine>
            <ReportLine>ibestr has been finished!</ReportLine>
            <ReportLine $c="#f8b020">SUCCEEDED!!!</ReportLine>
            <ScrollCol><Tri/><ScrollThumb/><Tri $down/></ScrollCol>
          </ReportBox>
        </Main>
      </Body>
      <StatusBar>1.1 m x 0.53 m</StatusBar>
      <TaskBar/>
    </Root>
  );
}
